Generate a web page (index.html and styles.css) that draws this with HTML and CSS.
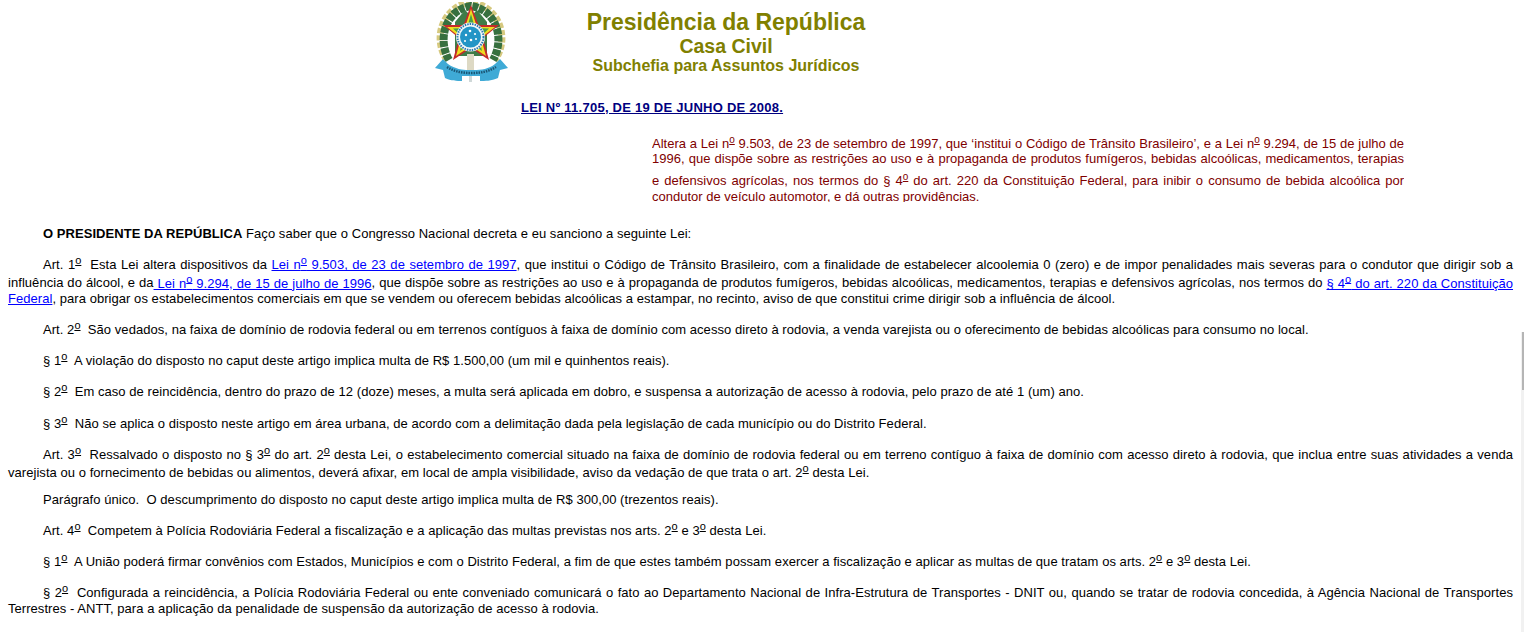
FILE: index.html
```html
<!DOCTYPE html>
<html lang="pt-BR">
<head>
<meta charset="utf-8">
<title>Lei nº 11.705</title>
<link rel="stylesheet" href="styles.css">
</head>
<body>
<header class="masthead">
  <svg class="crest" viewBox="0 0 74 80" width="74" height="80" aria-hidden="true">
    <path d="M12 58 C2 44 2 22 18 8 C24 3 30 1 36 0 C42 1 48 3 54 8 C70 22 70 44 60 58" fill="none" stroke="#d6c97f" stroke-width="7" stroke-dasharray="5 2"/>
    <path d="M14 58 C6 44 6 24 20 11 C25 7 30 5 36 4 C42 5 47 7 52 11 C66 24 66 44 58 58" fill="none" stroke="#37703f" stroke-width="8" stroke-dasharray="6 1"/>
    <path d="M20 20 L30 8 L36 14 L42 8 L52 20 L52 54 L20 54Z" fill="#3f7c48"/>
    <path d="M36 3 L43.500 23 L64 23 L48 36 L54 58 L36 46 L18 58 L24 36 L8 23 L28.500 23Z" fill="#c52a2a"/>
    <path d="M36 7 L42 25 L60 25 L46 36 L51 54 L36 44 L21 54 L26 36 L12 25 L30 25Z" fill="#eedd20"/>
    <path d="M36 12 L40 26 L54 26.500 L44 36 L47 49 L36 41 L25 49 L28 36 L18 26.500 L32 26Z" fill="#47a04a"/>
    <circle cx="35.500" cy="35" r="14.500" fill="#f3f7f7"/>
    <circle cx="35.500" cy="35" r="13" fill="none" stroke="#2a78b0" stroke-width="2" stroke-dasharray="1.500 1"/>
    <circle cx="35.500" cy="35" r="10.500" fill="#2295c6"/>
    <g fill="#fff">
      <circle cx="35" cy="29" r="1.300"/><circle cx="31" cy="33" r="1.200"/><circle cx="40" cy="32" r="1.100"/>
      <circle cx="36" cy="38" r="1.300"/><circle cx="41" cy="37" r="1"/><circle cx="30" cy="39" r="1"/>
    </g>
    <rect x="32" y="52" width="7" height="20" fill="#ddd9c4"/>
    <path d="M0 66 L8 57 L13 62 C20 67 28 68 33 68 L39 68 C46 68 54 67 60 62 L65 57 L73 66 L65 68 L63 76 C56 79 50 79 45 79 L45 74 L27 74 L27 79 C22 79 16 79 10 76 L8 68Z" fill="#3faad6"/>
    <path d="M12 65 C20 70 28 71 36 71 C45 71 53 70 61 65" fill="none" stroke="#1a5573" stroke-width="2.500" stroke-dasharray="1.500 1"/>
    <rect x="34" y="74" width="3" height="6" fill="#cfd8d8"/>
  </svg>
  <div class="titles">
    <div class="t1">Presidência da República</div>
    <div class="t2">Casa Civil</div>
    <div class="t3">Subchefia para Assuntos Jurídicos</div>
  </div>
</header>

<h1 class="lei"><a href="#">LEI Nº 11.705, DE 19 DE JUNHO DE 2008.</a></h1>

<div class="ementa">
  <p class="em1">Altera a Lei n<sup><u>o</u></sup> 9.503, de 23 de setembro de 1997, que ‘institui o Código de Trânsito Brasileiro’, e a Lei n<sup><u>o</u></sup> 9.294, de 15 de julho de 1996, que dispõe sobre as restrições ao uso e à propaganda de produtos fumígeros, bebidas alcoólicas, medicamentos, terapias</p>
  <p class="em2">e defensivos agrícolas, nos termos do § 4<sup><u>o</u></sup> do art. 220 da Constituição Federal, para inibir o consumo de bebida alcoólica por condutor de veículo automotor, e dá outras providências.</p>
</div>

<main class="texto">
  <p><b>O PRESIDENTE DA REPÚBLICA</b> Faço saber que o Congresso Nacional decreta e eu sanciono a seguinte Lei:</p>
  <p>Art. 1<sup><u>o</u></sup>&nbsp; Esta Lei altera dispositivos da <a href="#">Lei n<sup><u>o</u></sup> 9.503, de 23 de setembro de 1997</a>, que institui o Código de Trânsito Brasileiro, com a finalidade de estabelecer alcoolemia 0 (zero) e de impor penalidades mais severas para o condutor que dirigir sob a influência do álcool, e da<a href="#"> Lei n<sup><u>o</u></sup> 9.294, de 15 de julho de 1996</a>, que dispõe sobre as restrições ao uso e à propaganda de produtos fumígeros, bebidas alcoólicas, medicamentos, terapias e defensivos agrícolas, nos termos do <a href="#">§ 4<sup><u>o</u></sup> do art. 220 da Constituição Federal</a>, para obrigar os estabelecimentos comerciais em que se vendem ou oferecem bebidas alcoólicas a estampar, no recinto, aviso de que constitui crime dirigir sob a influência de álcool.</p>
  <p>Art. 2<sup><u>o</u></sup>&nbsp; São vedados, na faixa de domínio de rodovia federal ou em terrenos contíguos à faixa de domínio com acesso direto à rodovia, a venda varejista ou o oferecimento de bebidas alcoólicas para consumo no local.</p>
  <p>§ 1<sup><u>o</u></sup>&nbsp; A violação do disposto no caput deste artigo implica multa de R$ 1.500,00 (um mil e quinhentos reais).</p>
  <p>§ 2<sup><u>o</u></sup>&nbsp; Em caso de reincidência, dentro do prazo de 12 (doze) meses, a multa será aplicada em dobro, e suspensa a autorização de acesso à rodovia, pelo prazo de até 1 (um) ano.</p>
  <p>§ 3<sup><u>o</u></sup>&nbsp; Não se aplica o disposto neste artigo em área urbana, de acordo com a delimitação dada pela legislação de cada município ou do Distrito Federal.</p>
  <p class="tight">Art. 3<sup><u>o</u></sup>&nbsp; Ressalvado o disposto no § 3<sup><u>o</u></sup> do art. 2<sup><u>o</u></sup> desta Lei, o estabelecimento comercial situado na faixa de domínio de rodovia federal ou em terreno contíguo à faixa de domínio com acesso direto à rodovia, que inclua entre suas atividades a venda varejista ou o fornecimento de bebidas ou alimentos, deverá afixar, em local de ampla visibilidade, aviso da vedação de que trata o art. 2<sup><u>o</u></sup> desta Lei.</p>
  <p>Parágrafo único.&nbsp; O descumprimento do disposto no caput deste artigo implica multa de R$ 300,00 (trezentos reais).</p>
  <p>Art. 4<sup><u>o</u></sup>&nbsp; Competem à Polícia Rodoviária Federal a fiscalização e a aplicação das multas previstas nos arts. 2<sup><u>o</u></sup> e 3<sup><u>o</u></sup> desta Lei.</p>
  <p>§ 1<sup><u>o</u></sup>&nbsp; A União poderá firmar convênios com Estados, Municípios e com o Distrito Federal, a fim de que estes também possam exercer a fiscalização e aplicar as multas de que tratam os arts. 2<sup><u>o</u></sup> e 3<sup><u>o</u></sup> desta Lei.</p>
  <p>§ 2<sup><u>o</u></sup>&nbsp; Configurada a reincidência, a Polícia Rodoviária Federal ou ente conveniado comunicará o fato ao Departamento Nacional de Infra-Estrutura de Transportes - DNIT ou, quando se tratar de rodovia concedida, à Agência Nacional de Transportes Terrestres - ANTT, para a aplicação da penalidade de suspensão da autorização de acesso à rodovia.</p>
</main>
<div class="scroll-track"><div class="scroll-thumb"></div></div>
</body>
</html>
```
FILE: styles.css
```css
html, body { margin: 0; height: 632px; overflow: hidden; background: #fff; }
body { font-family: "Liberation Sans", Arial, sans-serif; font-size: 13px; color: #000; padding: 0 11px 0 8px; box-sizing: border-box; position: relative; letter-spacing: 0.050px; }
.masthead { display: flex; align-items: flex-start; padding: 2px 0 0 427px; height: 100px; box-sizing: border-box; }
.crest { flex: none; }
.titles { width: 436px; margin-left: -1px; text-align: center; font-weight: bold; color: #808000; padding-top: 8px; letter-spacing: 0; }
.t1 { font-size: 23px; line-height: 25px; }
.t2 { font-size: 19.500px; line-height: 22px; }
.t3 { font-size: 16px; line-height: 18px; }
.lei { margin: 0; padding-left: 513px; font-size: 13px; font-weight: bold; line-height: 15px; letter-spacing: 0.250px; }
.lei a { color: #000080; }
.ementa { margin: 19px 109px 1px 644px; height: 68px; overflow: hidden; color: #800000; text-align: justify; letter-spacing: 0; }
.ementa p { margin: 0; }
.ementa sup { font-size: 10px; }
.ementa .em1 { text-align-last: justify; }
.ementa .em2 { margin-top: 5px; }
.texto { margin-top: 24px; }
.texto p { margin: 0 0 13px; text-align: justify; text-indent: 35px; }
.texto p.tight { margin-bottom: 11px; }
.texto a { color: #00f; }
sup { font-size: 11px; }
.scroll-track { position: absolute; right: 0; top: 332px; width: 3px; height: 300px; background: #f1f1f1; }
.scroll-thumb { width: 2px; height: 58px; margin-left: 1px; background: #b5b5b5; }
```
